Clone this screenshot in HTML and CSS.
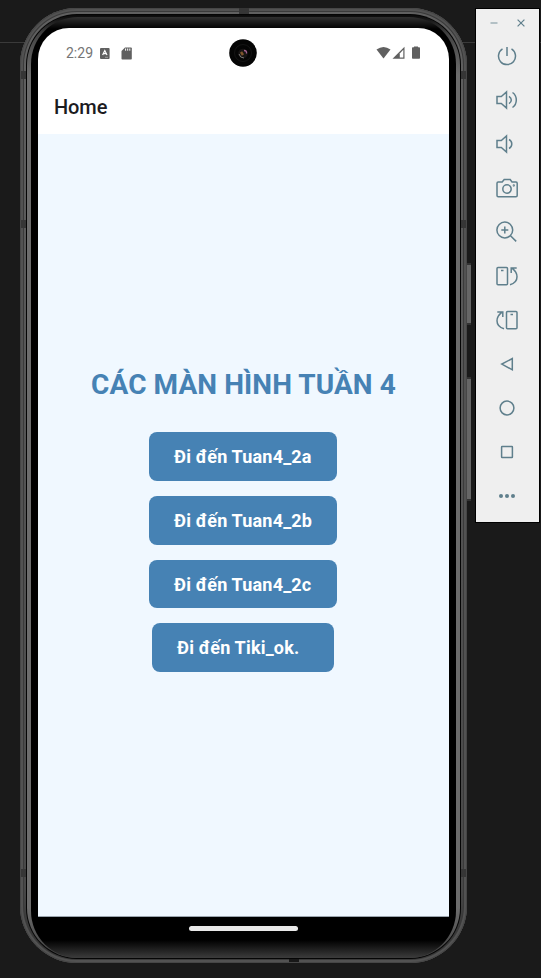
FILE: index.html
```html
<!DOCTYPE html>
<html lang="vi">
<head>
<meta charset="utf-8">
<title>Home</title>
<link rel="stylesheet" href="styles.css">
</head>
<body>
<main class="desktop">
  <div class="guide"></div>
  <div class="phone">
    <span class="key key-power"></span>
    <span class="key key-volume"></span>
    <span class="band band-top"></span>
    <span class="band band-l1"></span><span class="band band-l2"></span><span class="band band-l3"></span>
    <span class="band band-r1"></span><span class="band band-r2"></span><span class="band band-r3"></span>
    <span class="band band-bottom"></span>
    <div class="groove"><div class="rim"><div class="bezel">
      <div class="screen">
        <header class="status">
          <span class="clock">2:29</span>
          <svg class="ic-a" width="10" height="11" viewBox="0 0 10 11"><rect width="9.6" height="11" rx="1" fill="#606060"/><path d="M2.6 7 4.8 2.6 7 7M3.4 5.6h2.8" fill="none" stroke="#fff" stroke-width="1.2"/><path d="M5 9.300h3" stroke="#bbb" stroke-width=".7"/></svg>
          <svg class="ic-sd" width="11" height="13" viewBox="0 0 11 13"><path d="M4 .5h6q.8 0 .8.8v10.400q0 .8-.8.8H1.300q-.8 0-.8-.8V4z" fill="#606060"/><path d="M4.600 1.500v2.200M6.700 1.500v2.200M8.800 1.500v2.200" stroke="#fff" stroke-width="1"/></svg>
          <svg class="ic-signals" width="46" height="14" viewBox="0 0 46 14"><path d="M.5 3.500Q7.500-1.500 14.500 3.500L7.500 12.500z" fill="#606060"/><path d="M28.500.8V12.700H16.500z" fill="#606060"/><path d="M27.300 3.800v7.700h-3.500V7.400z" fill="#fff"/><path d="M38 1.300V.5h4v.8h1.200q.8 0 .8.800v9.800q0 .8-.8.800h-6.400q-.8 0-.8-.8V2.100q0-.8.8-.8z" fill="#606060"/></svg>
        </header>
        <span class="camera"><svg width="28" height="28" viewBox="0 0 28 28"><circle cx="14" cy="14" r="13.800" fill="#050505"/><circle cx="14" cy="14" r="8.500" fill="none" stroke="#141414"/><circle cx="14" cy="14.500" r="4.800" fill="#171414"/><path d="M10 15q1 4 5 4" fill="none" stroke="#777" stroke-width="1"/><path d="M12 13l2 3" stroke="#80562c" stroke-width="2.500"/><path d="M15 11.500q3 0 2.500 3" fill="none" stroke="#a46292" stroke-width="1.300"/></svg></span>
        <h1 class="appbar">Home</h1>
        <section class="content">
          <h2 class="title">CÁC MÀN HÌNH TUẦN 4</h2>
          <button class="btn">Đi đến Tuan4_2a</button>
          <button class="btn">Đi đến Tuan4_2b</button>
          <button class="btn btn-c">Đi đến Tuan4_2c</button>
          <button class="btn btn-tiki">Đi đến Tiki_ok.</button>
        </section>
      </div>
      <div class="navbar"><span class="pill"></span></div>
    </div></div></div>
  </div>
  <aside class="toolbar">
    <div class="window-buttons">
      <svg width="10" height="10" viewBox="0 0 10 10"><path d="M1.500 5h7" stroke="#8aa0a9"/></svg>
      <svg width="10" height="10" viewBox="0 0 10 10"><path d="m1.600 1.600 6.800 6.800m0-6.800L1.600 8.400"/></svg>
    </div>
    <div class="tool"><svg viewBox="0 0 24 24"><path d="M12 3v9M7.500 4.900a8.500 8.500 0 1 0 9 0"/></svg></div>
    <div class="tool"><svg viewBox="0 0 24 24"><path d="M2 8.500h4.300L11.500 4v16l-5.200-4.500H2zM14 8.300q2.300 1.500 2.300 3.700T14 15.700M17.500 4.500q3.800 2.700 3.800 7.500t-3.800 7.500"/></svg></div>
    <div class="tool"><svg viewBox="0 0 24 24"><path d="M2 8.500h4.300L11.500 4v16l-5.200-4.500H2zM14 7.500q2.800 1.500 2.800 4.500T14 16.500"/></svg></div>
    <div class="tool"><svg viewBox="0 0 24 24"><path d="M3.200 6h4l2-2.500h6L17 6h4q1.200 0 1.200 1.200v12.300q0 1.200-1.200 1.200H3.200Q2 20.700 2 19.500V7.200Q2 6 3.200 6z"/><circle cx="12" cy="13" r="4.200"/><circle cx="18.800" cy="9.500" r=".4"/></svg></div>
    <div class="tool"><svg viewBox="0 0 24 24"><circle cx="9.800" cy="10" r="7.900"/><path d="M9.800 6.500v7M6.300 10h7M15.500 15.700l5.700 5.700"/></svg></div>
    <div class="tool"><svg viewBox="0 0 24 24"><rect x="2" y="3.500" width="10.500" height="17.200" rx="1"/><path d="M6 6.500h2.500M15 20.700q7-2 7-8 0-4.500-5-8.500M16.200 9V4h5.500"/></svg></div>
    <div class="tool"><svg viewBox="0 0 24 24"><rect x="11.500" y="3.500" width="10.500" height="17.200" rx="1"/><path d="M15.500 6.500H18M9 20.700q-7-2-7-8 0-4.500 5-8.500M7.800 9V4H2.300"/></svg></div>
    <div class="tool"><svg viewBox="0 0 24 24"><path d="M17.300 6.500v11.300L6.800 12.100z"/></svg></div>
    <div class="tool"><svg viewBox="0 0 24 24"><circle cx="12" cy="12" r="6.900"/></svg></div>
    <div class="tool"><svg viewBox="0 0 24 24"><rect x="6.600" y="6.600" width="10.800" height="10.800" rx=".5"/></svg></div>
    <div class="tool"><svg viewBox="0 0 24 24"><g fill="#5f7f8c" stroke="none"><circle cx="6" cy="12" r="2"/><circle cx="12" cy="12" r="2"/><circle cx="18" cy="12" r="2"/></g></svg></div>
  </aside>
</main>
</body>
</html>
```
FILE: styles.css
```css
* { box-sizing: border-box; }
body { margin: 0; background: #1a1a1a; font-family: Roboto, sans-serif; overflow: hidden; }
.desktop { position: relative; height: 978px; padding: 8px 1px 0 20px; display: flex; align-items: flex-start; gap: 8px; }
.guide { position: absolute; left: 0; right: 0; top: 42px; height: 1px; background: #3a3a3a; }
.phone { position: relative; width: 447px; height: 955px; flex: none; padding: 6px 6px 4px; border-radius: 57px; background: linear-gradient(#606060, #4e4e4e 70%, #484848 92%, #2c2c2c); box-shadow: inset 0 0 0 1px #464646, inset 0 0 0 3px #525252, inset 0 0 0 4px #3a3a3a; }
.groove { height: 100%; padding: 1px; border-radius: 51px; background: #050505; }
.rim { height: 100%; padding: 2px 4px 0; border-radius: 50px; background: linear-gradient(#0a0a0a, #444 20px, #6c6c6c 60px, #6c6c6c calc(100% - 50px), #3c3c3c); }
.bezel { height: 100%; padding: 11px 7px 0; border-radius: 47px; background: linear-gradient(#303030, #000 12px, #000 calc(100% - 18px), #3c3c3c); display: flex; flex-direction: column; }
.screen { position: relative; height: 889px; flex: none; border-radius: 31px 31px 0 0; background: #fff; overflow: hidden; display: flex; flex-direction: column; }
.key { position: absolute; right: -4px; width: 4px; background: #666; border: solid #333; border-width: 2px 0; }
.key-power { top: 255px; height: 62px; }
.key-volume { top: 369px; height: 124px; }
.band { position: absolute; background: #363636; }
.band-top { left: 219px; top: 0; width: 10px; height: 6px; }
.band-bottom { left: 269px; bottom: 1px; width: 10px; height: 3px; background: #181818; }
.band-l1, .band-l2, .band-l3 { left: 1px; width: 5px; height: 8px; }
.band-r1, .band-r2, .band-r3 { right: 1px; width: 5px; height: 8px; }
.band-l1, .band-r1 { top: 63px; }
.band-l2, .band-r2 { top: 212px; }
.band-l3, .band-r3 { top: 861px; }
.status { height: 50px; padding: 0 27px 0 28px; display: flex; align-items: center; color: #757575; }
.clock { width: 34px; font-size: 14px; line-height: 16px; }
.ic-sd { margin-left: 11px; }
.ic-signals { margin-left: auto; }
.camera { position: absolute; left: 191px; top: 11px; width: 28px; height: 28px; }
.camera svg { display: block; }
.appbar { height: 56px; margin: 0; padding-left: 16px; font-size: 20px; font-weight: 500; line-height: 58px; letter-spacing: -.1px; color: #1c1b1f; }
.content { flex: 1; padding-bottom: 12px; background: #f0f8ff; border-bottom: 1px solid #9ba5ae; display: flex; flex-direction: column; align-items: center; justify-content: center; gap: 15px; }
.title { margin: 0 0 13px; font-size: 28px; line-height: 38px; font-weight: 700; letter-spacing: .08px; color: #4682b4; white-space: nowrap; }
.btn { width: 188px; height: 48.700px; margin-right: 1px; padding: 2px 0 0 25px; border: 0; border-radius: 8px; background: #4682b4; color: #fff; font: 700 18px/24px Roboto, sans-serif; letter-spacing: .18px; text-align: left; white-space: nowrap; }
.btn-tiki { width: 182px; padding-top: 1px; }
.navbar { flex: 1; padding-top: 9px; display: flex; justify-content: center; }
.pill { width: 109px; height: 5px; border-radius: 3px; background: #e8e8e8; }
.toolbar { position: relative; width: 65px; height: 515px; flex: none; background: #efefef; border: 1px solid #000; }
.toolbar svg { fill: none; stroke: #5f7f8c; stroke-width: 1.500; display: block; }
.window-buttons { height: 25px; padding: 9px 13px 0; display: flex; justify-content: space-between; }
.window-buttons svg { stroke-width: 1.200; }
.tool { height: 44px; padding-right: 2px; display: flex; align-items: center; justify-content: center; }
.tool svg { width: 24px; height: 24px; }
```
